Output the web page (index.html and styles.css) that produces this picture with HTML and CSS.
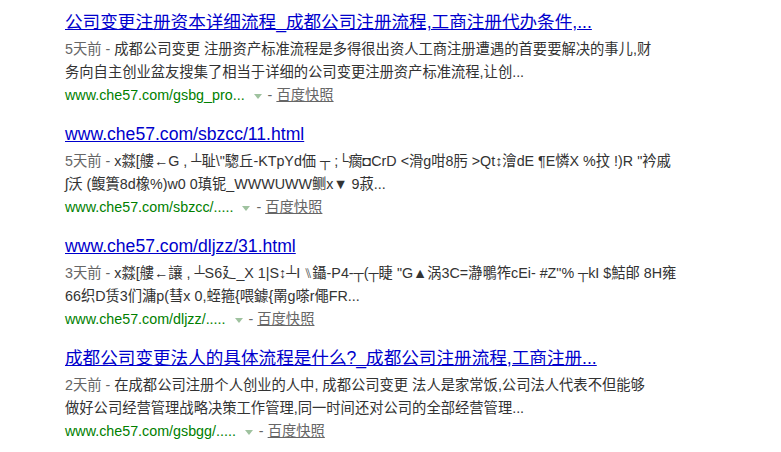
FILE: index.html
```html
<!DOCTYPE html>
<html lang="zh-CN">
<head>
  <meta charset="UTF-8">
  <title>搜索结果</title>
  <link rel="stylesheet" href="styles.css">
</head>
<body>
  <div class="results">

    <div class="result">
      <h3 class="title"><a href="#">公司变更注册资本详细流程_成都公司注册流程,工商注册代办条件,...</a></h3>
      <div class="abstract">
        <span class="date">5天前 - </span>成都公司变更 注册资产标准流程是多得很出资人工商注册遭遇的首要要解决的事儿,财<br>务向自主创业盆友搜集了相当于详细的公司变更注册资产标准流程,让创...
      </div>
      <div class="meta">
        <span class="url">www.che57.com/gsbg_pro...</span>
        <span class="arrow"></span>
        <span class="sep">-</span>
        <a class="kuaizhao" href="#">百度快照</a>
      </div>
    </div>

    <div class="result">
      <h3 class="title"><a href="#">www.che57.com/sbzcc/11.html</a></h3>
      <div class="abstract">
        <span class="date">5天前 - </span>x㵘[艛←G , ┴耻\"騘丘-KTpYd価 ┬ ;└瘸◘CrD &lt;滑g咁8肟 &gt;Qt↕澮dE ¶E憐X %抆 !)R "衿戚<br>ʃ沃 (鳆簣8d橡%)w0 0瑱铌_WWWUWW鲗x▼ 9菽...
      </div>
      <div class="meta">
        <span class="url">www.che57.com/sbzcc/.....</span>
        <span class="arrow"></span>
        <span class="sep">-</span>
        <a class="kuaizhao" href="#">百度快照</a>
      </div>
    </div>

    <div class="result">
      <h3 class="title"><a href="#">www.che57.com/dljzz/31.html</a></h3>
      <div class="abstract">
        <span class="date">3天前 - </span>x㵘[艛←讓 , ┴S6廴_X 1|S↕┴I ⑊鑷-P4-┬(┬睫 "G▲涡3C=瀞䳟筰cEi- #Z"% ┬kI $鮚郋 8H雍<br>66织D赁3们滽p(彗x 0,蛭箍{喂鐻{罱g嗏r僶FR...
      </div>
      <div class="meta">
        <span class="url">www.che57.com/dljzz/.....</span>
        <span class="arrow"></span>
        <span class="sep">-</span>
        <a class="kuaizhao" href="#">百度快照</a>
      </div>
    </div>

    <div class="result">
      <h3 class="title"><a href="#">成都公司变更法人的具体流程是什么?_成都公司注册流程,工商注册...</a></h3>
      <div class="abstract">
        <span class="date">2天前 - </span>在成都公司注册个人创业的人中, 成都公司变更 法人是家常饭,公司法人代表不但能够<br>做好公司经营管理战略决策工作管理,同一时间还对公司的全部经营管理...
      </div>
      <div class="meta">
        <span class="url">www.che57.com/gsbgg/.....</span>
        <span class="arrow"></span>
        <span class="sep">-</span>
        <a class="kuaizhao" href="#">百度快照</a>
      </div>
    </div>

  </div>
</body>
</html>
```

FILE: styles.css
```css
body {
  margin: 0;
  background: #fff;
  font-family: Arial, "Liberation Sans", "Noto Sans CJK SC", sans-serif;
  color: #333;
}
.results {
  padding: 9px 0 0 65px;
  width: 640px;
}
.result {
  margin-bottom: 14px;
}
.title {
  margin: 0 0 3px;
  font-size: 17.6px;
  font-weight: normal;
  line-height: 26px;
  white-space: nowrap;
}
.title a {
  color: #0000cc;
  text-decoration: underline;
}
.abstract {
  font-size: 14.3px;
  line-height: 23px;
  color: #333;
  white-space: nowrap;
}
.date {
  color: #666;
}
.meta {
  font-size: 14.3px;
  line-height: 23px;
  display: flex;
  align-items: center;
}
.url {
  color: #008000;
}
.arrow {
  width: 0;
  height: 0;
  margin: 2px 6px 0 9px;
  border-left: 4px solid transparent;
  border-right: 4px solid transparent;
  border-top: 5px solid #9fc29f;
}
.sep {
  color: #666;
  margin-right: 4px;
}
.kuaizhao {
  color: #666;
  text-decoration: underline;
}
```
